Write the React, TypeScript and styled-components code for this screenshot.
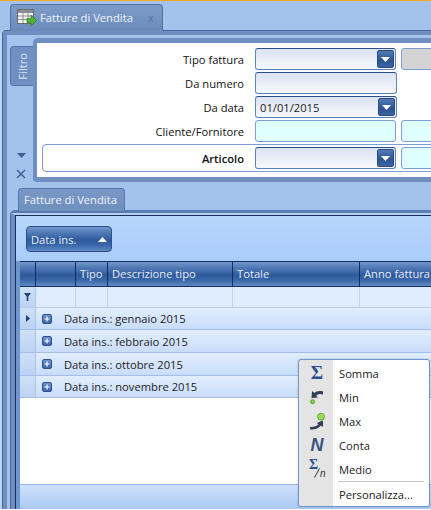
import React from "react";
import styled, { createGlobalStyle } from "styled-components";

const GlobalStyle = createGlobalStyle`
  html, body {
    margin: 0;
    padding: 0;
    background: #ffffff;
  }
  body {
    font-family: "Open Sans", "Noto Sans", "Liberation Sans", sans-serif;
    font-size: 11.2px;
    color: #1a1a1a;
  }
`;

const headerGradient = "linear-gradient(#7197cb 0%, #4f78b4 25%, #2f5a9b 55%, #3a67a9 75%, #5f8ac6 100%)";

const Window = styled.div`
  width: 431px;
  display: flex;
  flex-direction: column;
  overflow: hidden;
  background: #a3c2ec;
  border-top: 1px solid #f5a81c;
  box-sizing: content-box;
  height: 508px;
`;

const TabStrip = styled.div`
  height: 29px;
  flex: none;
  display: flex;
  align-items: flex-start;
  padding: 3px 0 0 10px;
  box-sizing: border-box;
`;

const DocTab = styled.div`
  position: relative;
  z-index: 1;
  width: 153px;
  height: 27px;
  box-sizing: border-box;
  display: flex;
  align-items: center;
  padding: 0 0 1px 6px;
  gap: 3px;
  background: linear-gradient(#7d9bc8, #6a8bbb);
  border: 1px solid #4f70a5;
  border-bottom: none;
  border-radius: 4px 4px 0 0;
  color: #f0f5fc;
`;

const CloseMark = styled.span`
  margin-left: 12px;
  color: #55759f;
  font-size: 11px;
`;

const DocFrame = styled.div`
  flex: 1;
  min-height: 0;
  margin-left: 2px;
  display: flex;
  flex-direction: column;
  background: #a3c2ec;
  border-top: 1px solid #46689c;
  border-left: 1px solid #46689c;
  border-top-left-radius: 4px;
  box-shadow: -2px 0 0 #bcd4f4;
`;

const DocBody = styled.div`
  flex: 1;
  min-height: 0;
  display: flex;
  flex-direction: column;
  border-top: 4px solid #6e8fc0;
  border-left: 4px solid #6e8fc0;
`;

const FilterArea = styled.div`
  flex: none;
  display: flex;
  margin-top: 3px;
`;

const Dock = styled.div`
  width: 26px;
  flex: none;
  display: flex;
  flex-direction: column;
  align-items: center;
  padding: 8px 0 0 3px;
  box-sizing: border-box;
`;

const SideTab = styled.div`
  width: 100%;
  height: 40px;
  flex: none;
  box-sizing: border-box;
  display: flex;
  align-items: center;
  justify-content: center;
  background: #6f90c0;
  border: 1px solid #5475a8;
  border-right: none;
  border-radius: 4px 0 0 4px;
  color: #dbe6f5;
`;

const SideLabel = styled.span`
  writing-mode: vertical-rl;
  transform: rotate(180deg);
`;

const DockButtons = styled.div`
  display: flex;
  flex-direction: column;
  align-items: center;
  gap: 11px;
  margin-top: 67px;
  margin-right: 1px;
`;

const FilterPanel = styled.div`
  flex: 1;
  min-width: 0;
  background: #ffffff;
  border-style: solid;
  border-color: #6f8fc0;
  border-width: 5px 0 5px 4px;
  border-top-left-radius: 5px;
  border-bottom-left-radius: 4px;
  padding: 5px 0 5px 5px;
  overflow: hidden;
`;

const FormRow = styled.div`
  display: flex;
  align-items: center;
  height: 22px;
  margin-bottom: 2px;
`;

const ArticoloBox = styled.div`
  display: flex;
  align-items: center;
  height: 28px;
  box-sizing: border-box;
  margin-right: -12px;
  border: 1px solid #7d9dd3;
  border-radius: 4px;
`;

const FieldLabel = styled.label<{ $bold?: boolean; $inset?: number }>`
  width: ${(p) => 202 - (p.$inset || 0)}px;
  flex: none;
  text-align: right;
  margin-right: 11px;
  font-weight: ${(p) => (p.$bold ? 600 : 400)};
  color: #111;
`;

const Field = styled.div<{ $kind?: "plain" | "cyan" | "grey"; $width?: number }>`
  position: relative;
  width: ${(p) => p.$width || 141}px;
  height: 22px;
  flex: none;
  box-sizing: border-box;
  margin-right: 5px;
  padding-left: 4px;
  display: flex;
  align-items: center;
  border: 1px solid #5f83bf;
  border-top-color: #2f4f88;
  border-radius: 3px;
  color: #222;
  background: ${(p) =>
    p.$kind === "cyan"
      ? "#dfffff"
      : p.$kind === "grey"
      ? "#d4d4d4"
      : "linear-gradient(#dbe3f2, #f7f9fd)"};
  ${(p) => (p.$kind === "grey" || p.$kind === "cyan" ? "border-color: #7d9dd3;" : "")}
`;

const ArrowButton = styled.span`
  position: absolute;
  top: 1px;
  right: 1px;
  width: 17px;
  height: 18px;
  display: flex;
  align-items: center;
  justify-content: center;
  background: linear-gradient(#5079b5, #2d5591 60%, #3a64a3);
  border: 1px solid #2b4a80;
  border-radius: 2px;
  box-sizing: border-box;
`;

const ResultTab = styled.div`
  position: relative;
  z-index: 1;
  width: 107px;
  height: 23px;
  box-sizing: border-box;
  margin: 6px 0 -1px 11px;
  flex: none;
  display: flex;
  align-items: center;
  padding: 0 0 2px 5px;
  background: linear-gradient(#7a98c5, #6e8fbe);
  border: 1px solid #5475a8;
  border-bottom: none;
  border-radius: 4px 4px 0 0;
  color: #eef3fb;
  white-space: nowrap;
`;

const ResultFrame = styled.div`
  flex: 1;
  min-height: 0;
  margin-left: 3px;
  display: flex;
  flex-direction: column;
  border-left: 1px solid #46689c;
  border-top: 3px solid #5a7cb1;
  border-top-left-radius: 5px;
`;

const ResultInner = styled.div`
  flex: 1;
  min-height: 0;
  display: flex;
  flex-direction: column;
  border-left: 4px solid #6e8fc0;
  border-top: 2px solid #b4cff2;
`;

const ResultBody = styled.div`
  flex: 1;
  min-height: 0;
  display: flex;
  flex-direction: column;
  border-left: 1px solid #14305f;
  border-top: 1px solid #14305f;
  background: linear-gradient(#b6d6fc, #a9cdfa 45px);
`;

const GroupBar = styled.div`
  flex: none;
  padding: 10px 0 9px 10px;
`;

const GroupButton = styled.div`
  width: 86px;
  height: 26px;
  box-sizing: border-box;
  display: flex;
  align-items: center;
  justify-content: space-between;
  padding: 0 4px 0 4px;
  background: ${headerGradient};
  border: 1px solid #2c4f88;
  border-radius: 4px;
  color: #e6eefa;
`;

const GridWrap = styled.div`
  flex: 1;
  min-height: 0;
  display: flex;
  flex-direction: column;
  background: #ffffff;
  border-left: 4px solid #7097cd;
`;

const columns = "16px 40px 32px 125px 127px 1fr";

const HeaderRow = styled.div`
  display: grid;
  grid-template-columns: ${columns};
  height: 26px;
  box-sizing: border-box;
  flex: none;
  background: ${headerGradient};
  border-top: 1px solid #14305f;
  border-bottom: 1px solid #14305f;
`;

const HeaderCell = styled.div`
  display: flex;
  align-items: center;
  padding: 0 0 1px 4px;
  border-right: 1px solid #14305f;
  color: #e4ecf8;
  white-space: nowrap;
  overflow: hidden;
  &:last-child {
    border-right: none;
  }
`;

const FilterRow = styled.div`
  display: grid;
  grid-template-columns: ${columns};
  height: 21px;
  box-sizing: border-box;
  flex: none;
  background: #dfecfd;
  border-bottom: 1px solid #c0cde0;
`;

const FilterCell = styled.div`
  border-right: 1px solid #c6d1e0;
  &:last-child {
    border-right: none;
  }
`;

const IndicatorCell = styled.div`
  width: 16px;
  flex: none;
  box-sizing: border-box;
  display: flex;
  align-items: center;
  justify-content: center;
  align-self: stretch;
  background: linear-gradient(#cfe0f8, #bcd2f2);
  border-right: 1px solid #aac4e8;
`;

const GroupRowBox = styled.div<{ $height: number }>`
  height: ${(p) => p.$height}px;
  box-sizing: border-box;
  flex: none;
  display: flex;
  align-items: center;
  background: linear-gradient(#e2eefe, #c8dcfa);
  border-bottom: 1px solid #a3bfe8;
`;

const Expander = styled.span`
  width: 10px;
  height: 10px;
  flex: none;
  box-sizing: border-box;
  margin: 0 12px 0 6px;
  display: flex;
  align-items: center;
  justify-content: center;
  border-radius: 2px;
  background: linear-gradient(#6d93cc, #3c66a8);
  border: 1px solid #2f5290;
`;

const GroupText = styled.span`
  color: #1c1c1c;
  white-space: nowrap;
`;

const GridSpace = styled.div`
  flex: 1;
`;

const GridFooter = styled.div`
  height: 25px;
  flex: none;
  box-sizing: border-box;
  background: linear-gradient(#cde1fc, #abc9f2);
  border-top: 1px solid #93b4e4;
`;

const Menu = styled.div`
  position: absolute;
  left: 298px;
  top: 359px;
  width: 132px;
  height: 148px;
  box-sizing: border-box;
  padding: 1px;
  background: linear-gradient(to right, #e4e4e4 34px, #ffffff 34px);
  border: 1px solid #7096cc;
  border-radius: 3px;
  box-shadow: 0 0 2px rgba(60, 80, 120, 0.35);
  z-index: 5;
`;

const MenuItem = styled.div`
  height: 24px;
  display: flex;
  align-items: center;
  color: #1c1c1c;
`;

const MenuIcon = styled.span`
  width: 34px;
  height: 24px;
  flex: none;
  display: flex;
  align-items: center;
  justify-content: center;
  position: relative;
  margin-right: 5px;
  color: #2c5190;
`;

const SigmaGlyph = styled.span`
  font-family: "Liberation Serif", serif;
  font-size: 19px;
  font-weight: 700;
`;

const LetterGlyph = styled.span`
  font-family: "Liberation Sans", sans-serif;
  font-size: 18px;
  font-weight: 700;
  font-style: italic;
  color: #3a5580;
`;

const SmallSigma = styled.span`
  position: absolute;
  left: 9px;
  top: 2px;
  line-height: 12px;
  font-family: "Liberation Serif", serif;
  font-size: 14px;
  font-weight: 700;
`;

const FractionBar = styled.svg`
  position: absolute;
  left: 14px;
  top: 11px;
`;

const SmallDivisor = styled.span`
  position: absolute;
  left: 20px;
  top: 12px;
  line-height: 10px;
  font-family: "Liberation Sans", sans-serif;
  font-size: 10px;
  font-style: italic;
  color: #333;
`;

const MenuDivider = styled.div`
  height: 1px;
  margin-left: 38px;
  margin-right: 4px;
  background: #c6c6c6;
`;

const TableArrowIcon = () => (
  <svg width="20" height="20" viewBox="0 0 20 20">
    <rect x="0.5" y="1.5" width="16" height="14" fill="#f4f4f4" stroke="#6a6a6a" />
    <rect x="1" y="2" width="15" height="3" fill="#8a8f96" />
    <path d="M1 8h15M1 11.500h15M6 5v10M11 5v10" stroke="#8d8d8d" fill="none" />
    <path d="M10 10.500h4V7l5.500 5.500-5.500 5.500v-3.500h-4z" fill="#4fb32e" stroke="#2e7d18" strokeWidth="0.7" />
  </svg>
);

const DownTriangle = ({ color = "#ffffff", w = 9, h = 5 }: { color?: string; w?: number; h?: number }) => (
  <svg width={w} height={h} viewBox={`0 0 ${w} ${h}`}>
    <path d={`M0 0H${w}L${w / 2} ${h}z`} fill={color} />
  </svg>
);

const Combo = ({ width, value }: { width?: number; value?: string }) => (
  <Field $width={width}>
    {value}
    <ArrowButton>
      <DownTriangle />
    </ArrowButton>
  </Field>
);

const MinIcon = () => (
  <svg width="20" height="20" viewBox="0 0 20 20">
    <path d="M16 4.500C12 3.500 9 4.500 7.500 6L5 4L4.500 11L11 10.500L9 8.500C11 7 13.500 6.500 16 7.500z" fill="#2f3f58" />
    <circle cx="5.600" cy="14.700" r="2" fill="#8ed14f" stroke="#4d8f20" strokeWidth="0.8" />
  </svg>
);

const MaxIcon = () => (
  <svg width="20" height="22" viewBox="0 0 20 22">
    <path d="M3 17C8 17 10 16 11.500 14L9.500 13L16 10.500L16 17L14 15.500C12 18 8 20 3 19.500z" fill="#2f3f58" />
    <circle cx="14" cy="6.700" r="3.500" fill="#9cdb5a" stroke="#5d9c2c" strokeWidth="0.8" />
  </svg>
);

const months = [
  { label: "gennaio 2015", height: 22, current: true },
  { label: "febbraio 2015", height: 23 },
  { label: "ottobre 2015", height: 23 },
  { label: "novembre 2015", height: 22 },
];

const headers = ["", "", "Tipo", "Descrizione tipo", "Totale", "Anno fattura"];

export default function App() {
  return (
    <>
      <GlobalStyle />
      <Window>
        <TabStrip>
          <DocTab>
            <TableArrowIcon />
            <span>Fatture di Vendita</span>
            <CloseMark>x</CloseMark>
          </DocTab>
        </TabStrip>
        <DocFrame>
          <DocBody>
            <FilterArea>
              <Dock>
                <SideTab>
                  <SideLabel>Filtro</SideLabel>
                </SideTab>
                <DockButtons>
                  <DownTriangle color="#3d5f95" w={9} h={5} />
                  <svg width="10" height="10" viewBox="0 0 10 10">
                    <path d="M1 1l8 8M9 1l-8 8" stroke="#3d5f95" strokeWidth="1.500" />
                  </svg>
                </DockButtons>
              </Dock>
              <FilterPanel>
                <FormRow>
                  <FieldLabel>Tipo fattura</FieldLabel>
                  <Combo />
                  <Field $kind="grey" $width={60} />
                </FormRow>
                <FormRow>
                  <FieldLabel>Da numero</FieldLabel>
                  <Field $width={142} />
                </FormRow>
                <FormRow>
                  <FieldLabel>Da data</FieldLabel>
                  <Combo width={142} value="01/01/2015" />
                </FormRow>
                <FormRow>
                  <FieldLabel>Cliente/Fornitore</FieldLabel>
                  <Field $kind="cyan" />
                  <Field $kind="cyan" $width={60} />
                </FormRow>
                <ArticoloBox>
                  <FieldLabel $bold $inset={1}>Articolo</FieldLabel>
                  <Combo />
                  <Field $kind="cyan" $width={60} />
                </ArticoloBox>
              </FilterPanel>
            </FilterArea>
            <ResultTab>Fatture di Vendita</ResultTab>
            <ResultFrame>
              <ResultInner>
                <ResultBody>
                  <GroupBar>
                    <GroupButton>
                      <span>Data ins.</span>
                      <svg width="9" height="5" viewBox="0 0 9 5">
                        <path d="M0 5H9L4.500 0z" fill="#ffffff" />
                      </svg>
                    </GroupButton>
                  </GroupBar>
                  <GridWrap>
                    <HeaderRow>
                      {headers.map((h, i) => (
                        <HeaderCell key={i}>{h}</HeaderCell>
                      ))}
                    </HeaderRow>
                    <FilterRow>
                      <IndicatorCell>
                        <svg width="7" height="8" viewBox="0 0 7 8">
                          <path d="M0 0h7L4.300 3.500V8H2.700V3.500z" fill="#1f3f72" />
                        </svg>
                      </IndicatorCell>
                      {headers.slice(1).map((_, i) => (
                        <FilterCell key={i} />
                      ))}
                    </FilterRow>
                    {months.map((m) => (
                      <GroupRowBox key={m.label} $height={m.height}>
                        <IndicatorCell>
                          {m.current && (
                            <svg width="4" height="7" viewBox="0 0 4 7">
                              <path d="M0 0l4 3.500L0 7z" fill="#1f3f72" />
                            </svg>
                          )}
                        </IndicatorCell>
                        <Expander>
                          <svg width="6" height="6" viewBox="0 0 6 6">
                            <path d="M3 0.500v5M0.500 3h5" stroke="#ffffff" strokeWidth="1.200" />
                          </svg>
                        </Expander>
                        <GroupText>Data ins.: {m.label}</GroupText>
                      </GroupRowBox>
                    ))}
                    <GridSpace />
                    <GridFooter />
                  </GridWrap>
                </ResultBody>
              </ResultInner>
            </ResultFrame>
          </DocBody>
        </DocFrame>
        <Menu>
          <MenuItem>
            <MenuIcon><SigmaGlyph>Σ</SigmaGlyph></MenuIcon>Somma
          </MenuItem>
          <MenuItem>
            <MenuIcon><MinIcon /></MenuIcon>Min
          </MenuItem>
          <MenuItem>
            <MenuIcon><MaxIcon /></MenuIcon>Max
          </MenuItem>
          <MenuItem>
            <MenuIcon><LetterGlyph>N</LetterGlyph></MenuIcon>Conta
          </MenuItem>
          <MenuItem>
            <MenuIcon>
              <SmallSigma>Σ</SmallSigma>
              <FractionBar width="6" height="10" viewBox="0 0 6 10">
                <path d="M5.500 0.500L0.500 9.500" stroke="#333333" strokeWidth="1" />
              </FractionBar>
              <SmallDivisor>n</SmallDivisor>
            </MenuIcon>
            Medio
          </MenuItem>
          <MenuDivider />
          <MenuItem>
            <MenuIcon />Personalizza...
          </MenuItem>
        </Menu>
      </Window>
    </>
  );
}
